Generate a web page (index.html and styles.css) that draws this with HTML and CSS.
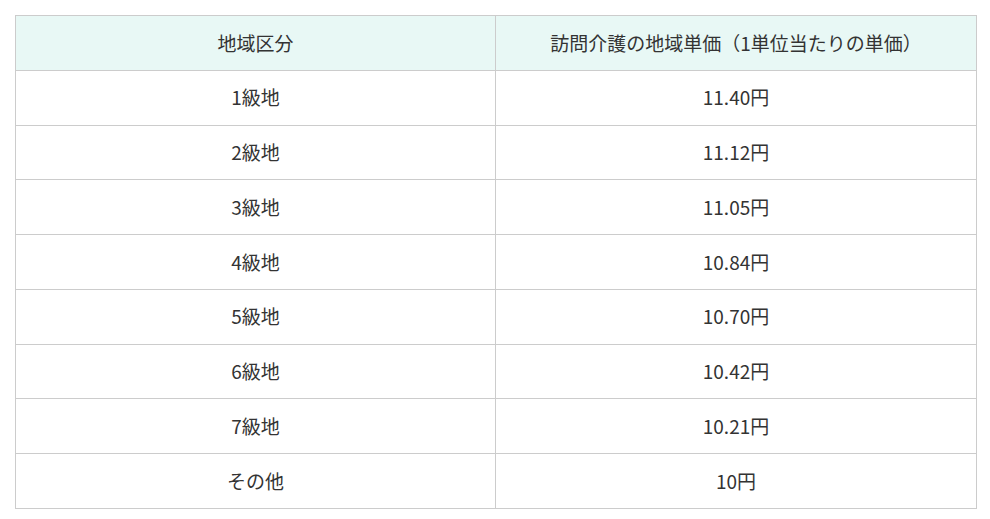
FILE: index.html
```html
<!DOCTYPE html>
<html lang="ja">
<head>
<meta charset="utf-8">
<link rel="stylesheet" href="styles.css">
</head>
<body>
<div class="wrap">
<table class="price-table">
<colgroup><col class="col-area"><col class="col-price"></colgroup>
<thead>
<tr><th>地域区分</th><th>訪問介護の地域単価（1単位当たりの単価）</th></tr>
</thead>
<tbody>
<tr><td>1級地</td><td>11.40円</td></tr>
<tr><td>2級地</td><td>11.12円</td></tr>
<tr><td>3級地</td><td>11.05円</td></tr>
<tr><td>4級地</td><td>10.84円</td></tr>
<tr><td>5級地</td><td>10.70円</td></tr>
<tr><td>6級地</td><td>10.42円</td></tr>
<tr><td>7級地</td><td>10.21円</td></tr>
<tr><td>その他</td><td>10円</td></tr>
</tbody>
</table>
</div>
</body>
</html>
```
FILE: styles.css
```css
html, body {
  margin: 0;
  background: #ffffff;
}
body {
  font-family: "Noto Sans CJK JP", "Noto Sans", sans-serif;
  color: #333333;
}
.wrap {
  padding: 15px 13px 0 15px;
}
.price-table {
  width: 100%;
  border-collapse: collapse;
  table-layout: fixed;
  font-size: 19px;
}
.col-area {
  width: 480px;
}
.price-table th,
.price-table td {
  border: 1px solid #cccccc;
  text-align: center;
  vertical-align: middle;
  padding: 0;
  height: 53.75px;
  font-weight: 400;
  line-height: 1.5;
}
.price-table th {
  background: #e8f8f5;
}
```
